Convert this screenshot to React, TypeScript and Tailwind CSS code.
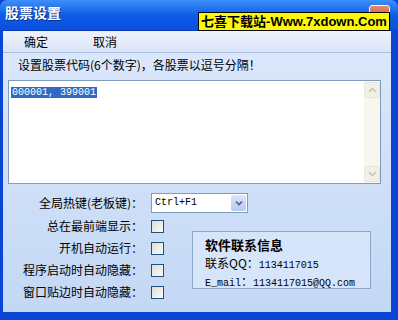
const cjk = "font-['SimSun','Noto_Sans_CJK_SC',sans-serif]";
const mono = "font-['Liberation_Mono','Noto_Sans_CJK_SC',monospace]";

function CheckBox() {
  return (
    <span className="block h-[13px] w-[13px] border border-[#1c5180] bg-gradient-to-br from-[#dcdcd7] to-[#fbfbf9]" />
  );
}

function Row({ label, children }: { label: string; children: React.ReactNode }) {
  return (
    <div className="flex h-[22px] items-center whitespace-nowrap">
      <span className="w-[140px] text-right">{label}</span>
      <span className="ml-[8px] flex items-center">{children}</span>
    </div>
  );
}

export default function App() {
  return (
    <div className={`flex h-[320px] w-[398px] flex-col overflow-hidden bg-[#0a45d6] text-[12px] leading-none text-black ${cjk}`}>
      {/* title bar */}
      <div className="relative h-[30px] shrink-0 rounded-t-[7px] bg-gradient-to-b from-[#3d8ff8] via-[#0c5ce8] to-[#0a50dc]">
        <span className="absolute left-[5px] top-[5px] text-[14px] font-bold text-white [text-shadow:1px_1px_0_#0a2f8a]">
          股票设置
        </span>
        <span className="absolute right-[8px] top-[5px] h-[21px] w-[21px] rounded-[3px] border border-white bg-gradient-to-b from-[#e8876a] to-[#c2401f]" />
        <div className="absolute left-[198px] top-[12px] flex h-[19px] w-[192px] items-center justify-center whitespace-nowrap border border-black bg-[#fbf60a] font-['Liberation_Sans','Noto_Sans_CJK_SC',sans-serif] text-[13px] font-bold text-black">
          七喜下载站-Www.7xdown.Com
        </div>
      </div>

      {/* client */}
      <div className="ml-[3px] mr-[7px] mb-[8px] flex flex-1 flex-col border-t border-[#0b3ab8] bg-gradient-to-b from-[#dde8fb] to-[#c3d8f5]">
        <div className="flex h-[22px] items-center gap-[45px] border-b border-[#a8bee4] bg-gradient-to-b from-[#eef2fc] to-[#dbe5f8] pl-[21px]">
          <span>确定</span>
          <span>取消</span>
        </div>
        <div className="pl-[15px] pt-[6px] whitespace-nowrap">设置股票代码(6个数字)，各股票以逗号分隔！</div>

        <div className="ml-[5px] mt-[9px] flex h-[104px] w-[373px] border border-[#7f9db9] bg-white">
          <div className="flex-1 pl-[2px] pt-[3px]">
            <span className={`bg-[#316ac5] px-[1px] text-[10px] leading-[12px] text-white ${mono}`}>000001, 399001</span>
          </div>
          <div className="flex w-[16px] flex-col justify-between bg-[#f7f6ef] py-[1px]">
            <span className="flex h-[16px] items-center justify-center rounded-[2px] border border-[#e6e6de] bg-[#f1efe6]">
              <svg width="9" height="6" viewBox="0 0 9 6"><path d="M1 5 L4.5 1.5 L8 5" fill="none" stroke="#c9c7ba" strokeWidth="1.6" /></svg>
            </span>
            <span className="flex h-[16px] items-center justify-center rounded-[2px] border border-[#e6e6de] bg-[#f1efe6]">
              <svg width="9" height="6" viewBox="0 0 9 6"><path d="M1 1 L4.5 4.5 L8 1" fill="none" stroke="#c9c7ba" strokeWidth="1.6" /></svg>
            </span>
          </div>
        </div>

        <div className="mt-[8px]">
          <Row label="全局热键(老板键)：">
            <span className="flex h-[20px] w-[97px] items-center border border-[#7f9db9] bg-white">
              <span className={`flex-1 pl-[3px] text-[10px] ${mono}`}>Ctrl+F1</span>
              <span className="mr-[1px] flex h-[16px] w-[15px] items-center justify-center rounded-[2px] bg-gradient-to-b from-[#dce6fb] to-[#b5c9f2]">
                <svg width="8" height="6" viewBox="0 0 8 6"><path d="M1 1.5 L4 4.5 L7 1.5" fill="none" stroke="#4d6185" strokeWidth="1.6" /></svg>
              </span>
            </span>
          </Row>
        </div>
        <div className="mt-[1px] flex">
          <div className="flex flex-col">
            <Row label="总在最前端显示："><CheckBox /></Row>
            <Row label="开机自动运行："><CheckBox /></Row>
            <Row label="程序启动时自动隐藏："><CheckBox /></Row>
            <Row label="窗口贴边时自动隐藏："><CheckBox /></Row>
          </div>
          <div className="ml-[28px] mt-[16px] flex h-[58px] w-[179px] flex-col whitespace-nowrap border border-[#8ea6c8] bg-[#d7e5fa] pl-[12px]">
            <span className="mt-[6px] text-[13px] font-bold">软件联系信息</span>
            <span className="mt-[6px]">联系QQ：<span className={`text-[10px] ${mono}`}>1134117015</span></span>
            <span className="mt-[4px]">
              <span className={`text-[10px] ${mono}`}>E_mail</span>：<span className={`text-[10px] ${mono}`}>1134117015@QQ.com</span>
            </span>
          </div>
        </div>
      </div>
    </div>
  );
}
